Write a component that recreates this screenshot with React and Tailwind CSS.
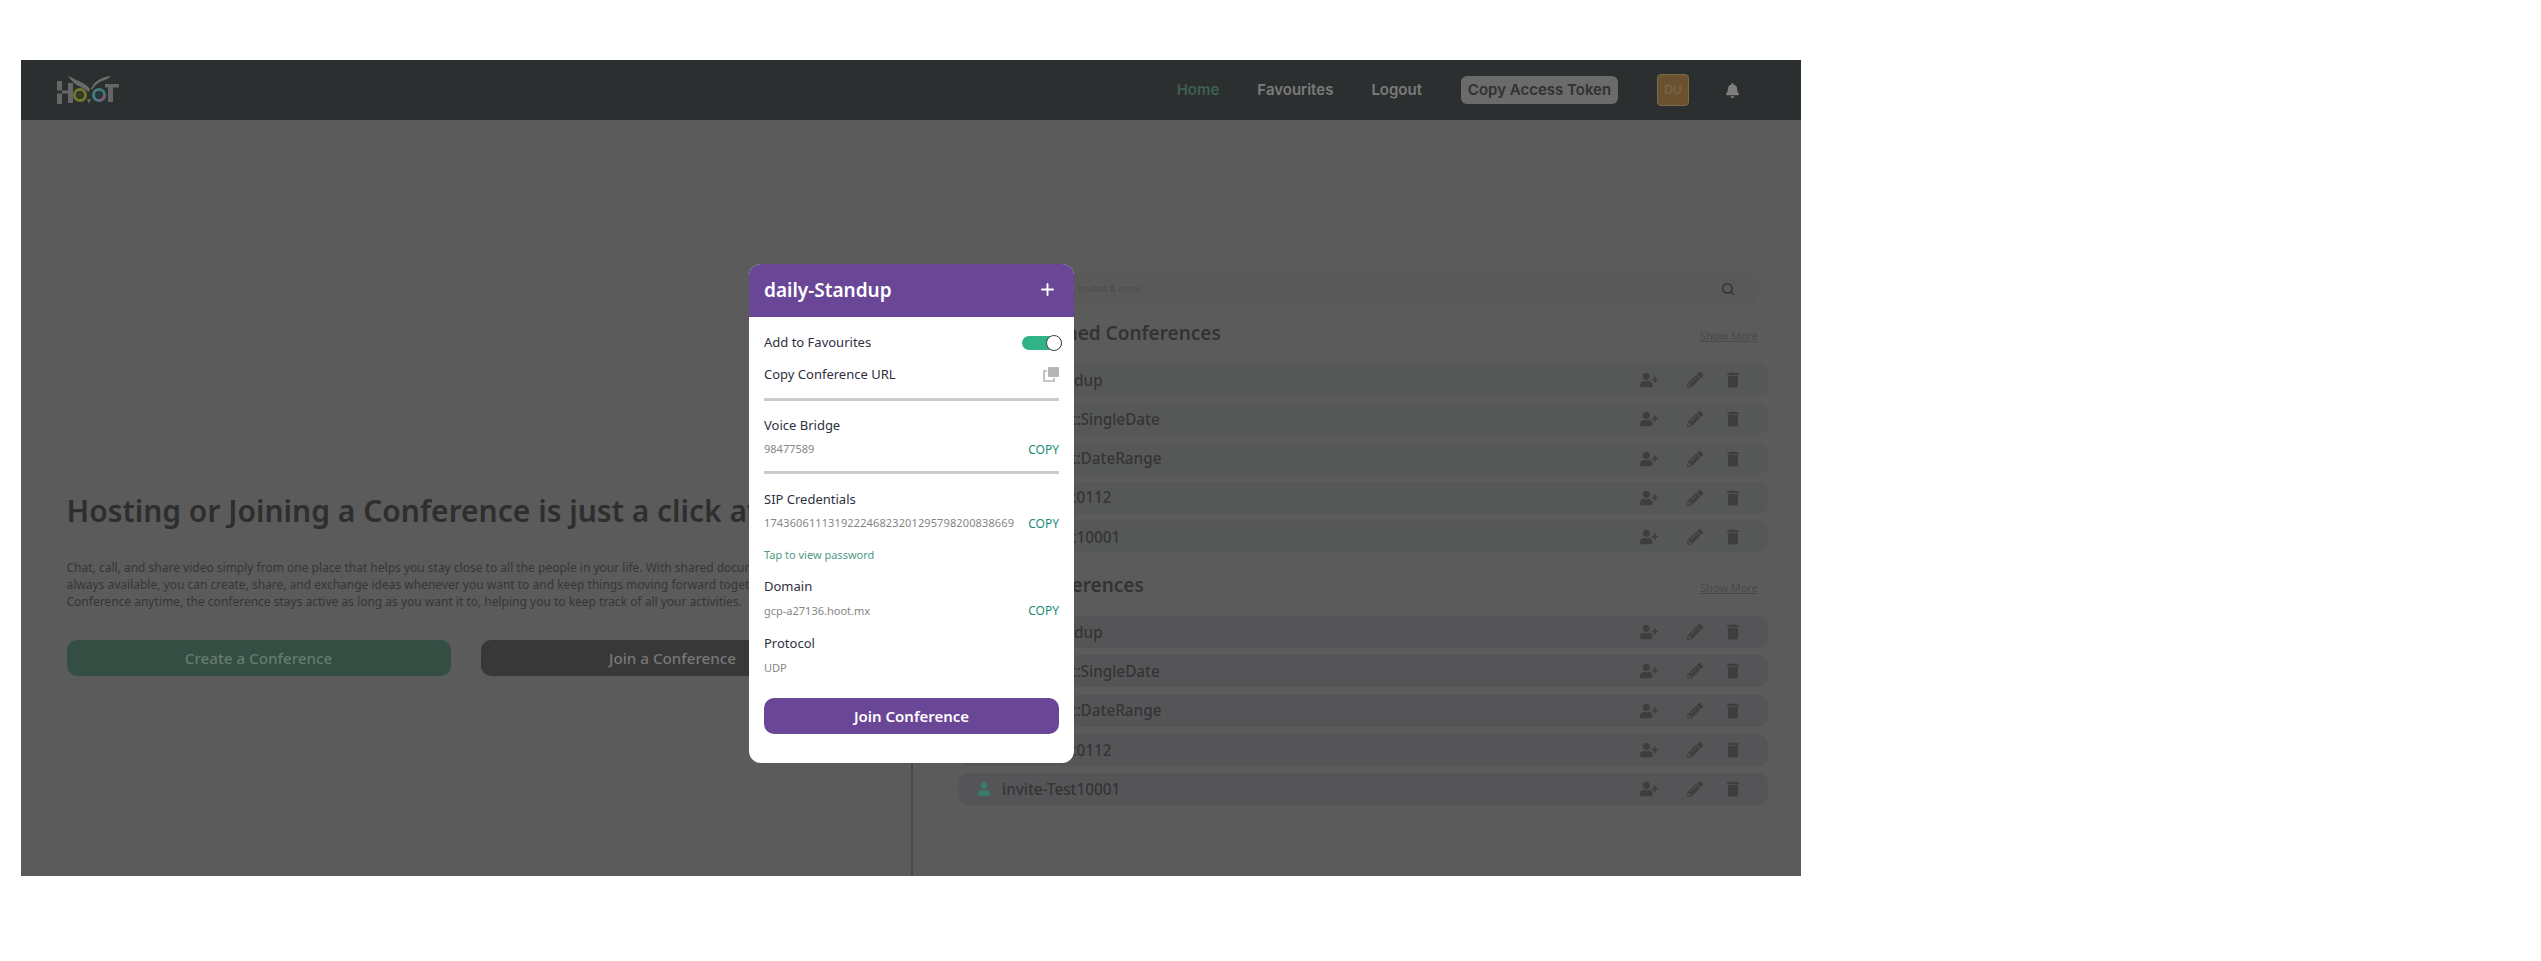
import { FaPencilAlt, FaBell, FaUser, FaUserPlus } from 'react-icons/fa';
import { MdDelete } from 'react-icons/md';
import { Search, Plus } from 'lucide-react';

const sansFont = 'font-["Noto_Sans",sans-serif]';

const conferenceNames = [
  'daily-Standup',
  'invite-Test:SingleDate',
  'invite-Test:DateRange',
  'invite-Test0112',
  'invite-Test10001',
];

function Logo() {
  return (
    <svg width="63" height="30" viewBox="0 0 63 30" fill="none">
      {/* H */}
      <path d="M0 6h5v9.5H0zM0 18.5h5V29H0zM5 15.5h7v3H5zM11 8h5v20h-5z" fill="#666" />
      {/* wings */}
      <path d="M11 0c7 6 16 6 22 14l-1 3C26 12 16 11 11 0Z" fill="#6a6a6a" />
      <path d="M34 14c3-8 10-12 20-13-2 4-12 4-17 11l-2 3Z" fill="#6a6a6a" />
      {/* eyes */}
      <circle cx="23" cy="20" r="5.5" stroke="#6f7b2a" strokeWidth="3" fill="#2c2f2f" />
      <circle cx="23" cy="20" r="2.5" fill="#3c4020" />
      <circle cx="42" cy="20" r="5.5" stroke="#437c7e" strokeWidth="3" fill="#2c2f2f" />
      <circle cx="42" cy="20" r="2.5" fill="#243c40" />
      <path d="M42 25.5a5.5 5.5 0 0 0 5.5-5.5" stroke="#7c5579" strokeWidth="3" />
      <path d="M30 24h4l-2 5Z" fill="#666" />
      {/* T */}
      <path d="M48 9h14v3.5H48zM51 12.5h5V27h-5z" fill="#666" />
    </svg>
  );
}

function Navbar() {
  return (
    <nav className='h-[60px] bg-[#2c2f2f] flex items-center pl-[36px] font-["Inter",sans-serif] text-[15px] font-semibold'>
      <Logo />
      <div className="ml-auto flex items-center text-[#7b7b7b]">
        <span className="text-[#3d5f52]">Home</span>
        <span className="ml-[38px]">Favourites</span>
        <span className="ml-[38px]">Logout</span>
        <span className="ml-[39px] w-[157px] h-[28px] rounded-md bg-[#6b6b6b] text-[#303131] flex items-center justify-center">
          Copy Access Token
        </span>
        <span className="ml-[39px] w-[32px] h-[32px] rounded bg-[#6a5230] border border-[#7d6a4a] text-[#7d6a4a] text-[12px] font-normal flex items-center justify-center">
          DU
        </span>
        <FaBell className="ml-[36px] mr-[61px] text-[#7f7f7f] text-[15px]" />
      </div>
    </nav>
  );
}

function Hero() {
  return (
    <section className={`w-[892px] shrink-0 flex flex-col ${sansFont}`}>
      <div className="h-[170px]" />
      <div className="flex-1 border-r-2 border-[#484848] pl-[45.5px]">
        <h1 className="mt-[199px] text-[30px] leading-[44px] font-semibold text-[#2e2e2e] whitespace-nowrap">
          Hosting or Joining a Conference is just a click away
        </h1>
        <p className="mt-[27px] text-[12px] leading-[16.8px] text-[#363636] whitespace-nowrap">
          Chat, call, and share video simply from one place that helps you stay close to all the people in your life. With shared documents
          <br />
          always available, you can create, share, and exchange ideas whenever you want to and keep things moving forward together. Host a
          <br />
          Conference anytime, the conference stays active as long as you want it to, helping you to keep track of all your activities.
        </p>
        <div className="mt-[30px] flex gap-[30px] text-[15.2px] font-medium">
          <button className="w-[384px] h-[36px] rounded-[10px] bg-[#344e43] text-[#667c71]">Create a Conference</button>
          <button className="w-[384px] h-[36px] rounded-[10px] bg-[#383838] text-[#787878]">Join a Conference</button>
        </div>
      </div>
    </section>
  );
}

function ConferenceRow({ name, rowColor }) {
  return (
    <div className={`h-[32px] rounded-[10px] flex items-center pl-[19px] ${rowColor}`}>
      <FaUser className="text-[#3a7a66] text-[14px] w-[14px]" />
      <span className="ml-[11px] text-[15.3px] font-medium text-[#343434]">{name}</span>
      <FaUserPlus className="ml-auto text-[#3e3e3e] text-[18px]" />
      <FaPencilAlt className="ml-[29px] text-[#3e3e3e] text-[16px]" />
      <MdDelete className="ml-[20px] mr-[25px] text-[#3e3e3e] text-[20px]" />
    </div>
  );
}

function ConferenceList({ title, rowColor, className }) {
  return (
    <div className={className}>
      <div className="flex items-center justify-between pr-[10px] h-[26px]">
        <h2 className="text-[19px] font-semibold text-[#333]">{title}</h2>
        <a className="text-[11px] mt-[6px] underline text-[#494949]">Show More</a>
      </div>
      <div className="mt-[18px] flex flex-col gap-[7.3px]">
        {conferenceNames.map((name) => (
          <ConferenceRow key={name} name={name} rowColor={rowColor} />
        ))}
      </div>
    </div>
  );
}

function RightPanel() {
  return (
    <section className={`flex-1 pl-[45px] pr-[33px] pt-[153px] ${sansFont}`}>
      <div className="mr-[10px] h-[32px] rounded-[10px] bg-[#595959] flex items-center pl-[17px] pr-[23px]">
        <span className="text-[9px] text-[#4b4b4b]">Search for Conferences, Invited &amp; more</span>
        <Search className="ml-auto text-[#333]" size={14} strokeWidth={2.5} />
      </div>
      <ConferenceList title="Recently Joined Conferences" rowColor="bg-[#565858]" className="mt-[15px]" />
      <ConferenceList title="Invited Conferences" rowColor="bg-[#555558]" className="mt-[19px]" />
    </section>
  );
}

function CopyIcon() {
  return (
    <svg width="16" height="15" viewBox="0 0 16 15" fill="none">
      <rect x="5" y="0" width="11" height="10" rx="1" fill="#b5b5b5" />
      <path d="M4 4H1v10h10v-3" stroke="#b5b5b5" strokeWidth="1.6" />
    </svg>
  );
}

function CopyField({ label, value, canCopy = true, valueClass = '' }) {
  return (
    <div>
      <div className="text-[13px] leading-[18px] text-[#2f3040]">{label}</div>
      <div className="mt-[7px] flex items-center justify-between h-[18px]">
        <span className={`text-[11px] text-[#858585] ${valueClass}`}>{value}</span>
        {canCopy && <span className="text-[12px] text-[#1d8a75]">COPY</span>}
      </div>
    </div>
  );
}

function ConferenceModal() {
  return (
    <div className={`absolute left-[728px] top-[204px] w-[325px] h-[499px] rounded-[12px] bg-white overflow-hidden ${sansFont}`}>
      <div className="h-[53px] bg-[#6a4697] flex items-center justify-between pl-[15px] pr-[17px] text-white">
        <h3 className="text-[19px] font-semibold">daily-Standup</h3>
        <Plus size={19} strokeWidth={2.4} className="-mt-[2px]" />
      </div>
      <div className="px-[15px]">
        <div className="mt-[16.5px] h-[18px] flex items-center justify-between text-[13px] text-[#2f3040]">
          <span>Add to Favourites</span>
          <span className="relative -mr-[3px] w-[40px] h-[14px] rounded-full bg-[#2fb387]">
            <span className="absolute right-0 -top-[1px] w-[16px] h-[16px] rounded-full bg-white border border-[#444]" />
          </span>
        </div>
        <div className="mt-[14px] h-[18px] flex items-center justify-between text-[13px] text-[#2f3040]">
          <span>Copy Conference URL</span>
          <CopyIcon />
        </div>
        <div className="mt-[14px] h-[3px] bg-[#cccccc]" />
        <div className="mt-[15px]">
          <CopyField label="Voice Bridge" value="98477589" />
        </div>
        <div className="mt-[12.5px] h-[3px] bg-[#cccccc]" />
        <div className="mt-[15.5px]">
          <CopyField label="SIP Credentials" value="174360611131922246823201295798200838669" valueClass="tracking-[0.12px]" />
        </div>
        <div className="mt-[13px] h-[18px] text-[11px] leading-[18px] text-[#4f9a87]">Tap to view password</div>
        <div className="mt-[13.5px]">
          <CopyField label="Domain" value="gcp-a27136.hoot.mx" />
        </div>
        <div className="mt-[14px]">
          <CopyField label="Protocol" value="UDP" canCopy={false} />
        </div>
        <button className="mt-[21px] w-full h-[36px] rounded-[10px] bg-[#6a4697] text-white text-[15px] font-semibold">
          Join Conference
        </button>
      </div>
    </div>
  );
}

export default function App() {
  return (
    <div className="min-h-[961px] bg-white pt-[60px] pl-[21px]">
      <div className="relative w-[1780px] h-[816px] bg-[#5b5b5b] overflow-hidden flex flex-col">
        <Navbar />
        <main className="flex-1 flex">
          <Hero />
          <RightPanel />
        </main>
        <ConferenceModal />
      </div>
    </div>
  );
}
